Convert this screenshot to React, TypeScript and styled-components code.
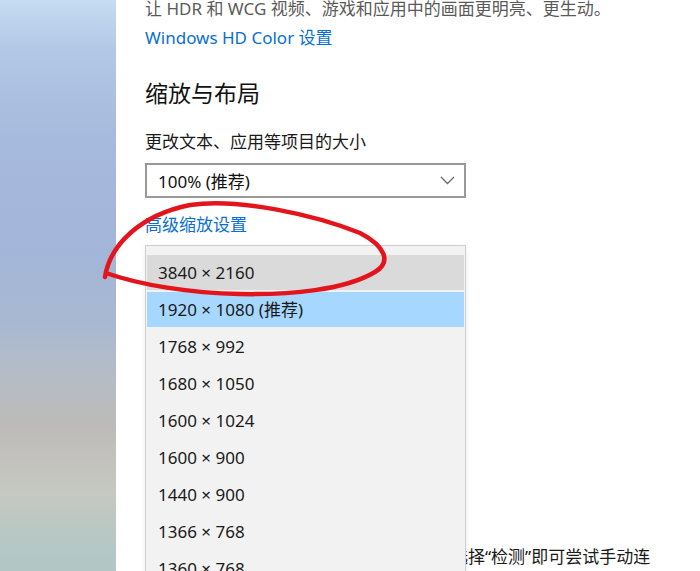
import * as React from "react";
import styled, { createGlobalStyle } from "styled-components";

const FONT = `"Segoe UI", "Noto Sans", "Noto Sans CJK SC", sans-serif`;
const LIEN = "#0a6fd4";

const Global = createGlobalStyle`
    html, body, #root {
        margin: 0;
        height: 100%;
    }
    body {
        overflow: hidden;
        background: #fff;
        font-family: ${FONT};
    }
`;

const Ecran = styled.div`
    position: relative;
    display: flex;
    height: 100vh;
    width: 100vw;
    overflow: hidden;
`;

const FondBureau = styled.div`
    flex: none;
    width: 116px;
    background: linear-gradient(
        to bottom,
        #c6dcf1 0px,
        #b2c8e6 50px,
        #a6badd 140px,
        #a3b6d9 250px,
        #a8b8d2 320px,
        #b6bcc4 380px,
        #bcbbb9 425px,
        #c4c4bf 470px,
        #c6c8c2 495px,
        #b9c8c4 530px,
        #b0c7c6 571px
    );
`;

const Panneau = styled.div`
    flex: 1;
    background: #fff;
    padding: 0 20px 0 29px;
    display: flex;
    flex-direction: column;
    align-items: flex-start;
    & > * {
        flex: none;
    }
`;

const Description = styled.p`
    margin: 0;
    font-size: 17px;
    line-height: 18px;
    color: #5a5a5a;
`;

const Lien = styled.a<{ $haut: number }>`
    display: block;
    margin-top: ${p => p.$haut}px;
    font-size: 17px;
    line-height: 24px;
    color: ${LIEN};
    text-decoration: none;
`;

const Titre = styled.h2<{ $haut: number }>`
    margin: ${p => p.$haut}px 0 0 0;
    font-size: 23px;
    line-height: 32px;
    font-weight: normal;
    color: #111;
`;

const Etiquette = styled.div<{ $haut: number }>`
    margin-top: ${p => p.$haut}px;
    font-size: 17px;
    line-height: 24px;
    color: #1a1a1a;
`;

const Selecteur = styled.div`
    flex: none;
    box-sizing: border-box;
    margin-top: 9px;
    width: 321px;
    height: 35px;
    border: 2px solid #999;
    padding: 0 9px 0 11px;
    display: flex;
    align-items: center;
    justify-content: space-between;
    font-size: 17px;
    color: #111;
    background: #fff;
`;

const Chevron = () => (
    <svg width="15" height="9" viewBox="0 0 15 9">
        <path d="M1 1 L7.5 7.5 L14 1" fill="none" stroke="#6b6b6b" strokeWidth="1.3" />
    </svg>
);

const Champ = styled.div`
    position: relative;
    display: flex;
    flex-direction: column;
    align-items: flex-start;
`;

// popup opened over the resolution field
const ListeDeroulante = styled.ul`
    position: absolute;
    top: 8px;
    left: 0;
    z-index: 2;
    box-sizing: border-box;
    width: 321px;
    margin: 0;
    padding: 9px 1px 0 1px;
    list-style: none;
    background: #f2f2f2;
    border: 1px solid #cfcfcf;
    box-shadow: 0 2px 6px rgba(0, 0, 0, 0.08);
`;

const Option = styled.li<{ $etat?: "survol" | "choisi" }>`
    height: 35px;
    margin-bottom: 2px;
    padding-left: 11px;
    font-size: 17px;
    line-height: 35px;
    color: #1a1a1a;
    background: ${p => p.$etat === "survol" ? "#dadada" : p.$etat === "choisi" ? "#a6d7fe" : "transparent"};
`;

const Paragraphe = styled.p`
    margin: 23px 0 0 0;
    max-width: 535px;
    font-size: 17px;
    line-height: 24px;
    color: #1a1a1a;
`;

const Annotation = styled.svg`
    position: absolute;
    top: 0;
    left: 0;
    z-index: 5;
    pointer-events: none;
`;

const resolutions = [
    "3840 × 2160",
    "1920 × 1080 (推荐)",
    "1768 × 992",
    "1680 × 1050",
    "1600 × 1024",
    "1600 × 900",
    "1440 × 900",
    "1366 × 768",
    "1360 × 768",
];

export default function App() {
    return (
        <Ecran>
            <Global />
            <FondBureau />
            <Panneau>
                <Description>让 HDR 和 WCG 视频、游戏和应用中的画面更明亮、更生动。</Description>
                <Lien $haut={8}>Windows HD Color 设置</Lien>
                <Titre $haut={27}>缩放与布局</Titre>
                <Etiquette $haut={21}>更改文本、应用等项目的大小</Etiquette>
                <Selecteur>
                    <span>100% (推荐)</span>
                    <Chevron />
                </Selecteur>
                <Lien $haut={15}>高级缩放设置</Lien>
                <Champ>
                    <Etiquette $haut={20}>显示分辨率</Etiquette>
                    <Selecteur>
                        <span>1920 × 1080 (推荐)</span>
                        <Chevron />
                    </Selecteur>
                    <ListeDeroulante>
                        {resolutions.map((r, i) =>
                            <Option key={r} $etat={i === 0 ? "survol" : i === 1 ? "choisi" : undefined}>{r}</Option>
                        )}
                    </ListeDeroulante>
                </Champ>
                <Etiquette $haut={20}>显示方向</Etiquette>
                <Selecteur>
                    <span>横向</span>
                    <Chevron />
                </Selecteur>
                <Titre $haut={77}>多显示器设置</Titre>
                <Paragraphe>较旧的显示器可能不会总是自动连接。请选择“检测”即可尝试手动连接。</Paragraphe>
            </Panneau>
            <Annotation width="700" height="571" viewBox="0 0 700 571">
                <path
                    d="M105 277 C110 245, 140 215, 190 205 C240 198, 315 215, 360 233 C385 246, 392 262, 375 272 C345 290, 290 295, 240 294 C190 293, 140 285, 106 273"
                    fill="none"
                    stroke="#e3141b"
                    strokeWidth="4.5"
                    strokeLinecap="round"
                    strokeLinejoin="round"
                />
            </Annotation>
        </Ecran>
    );
}
